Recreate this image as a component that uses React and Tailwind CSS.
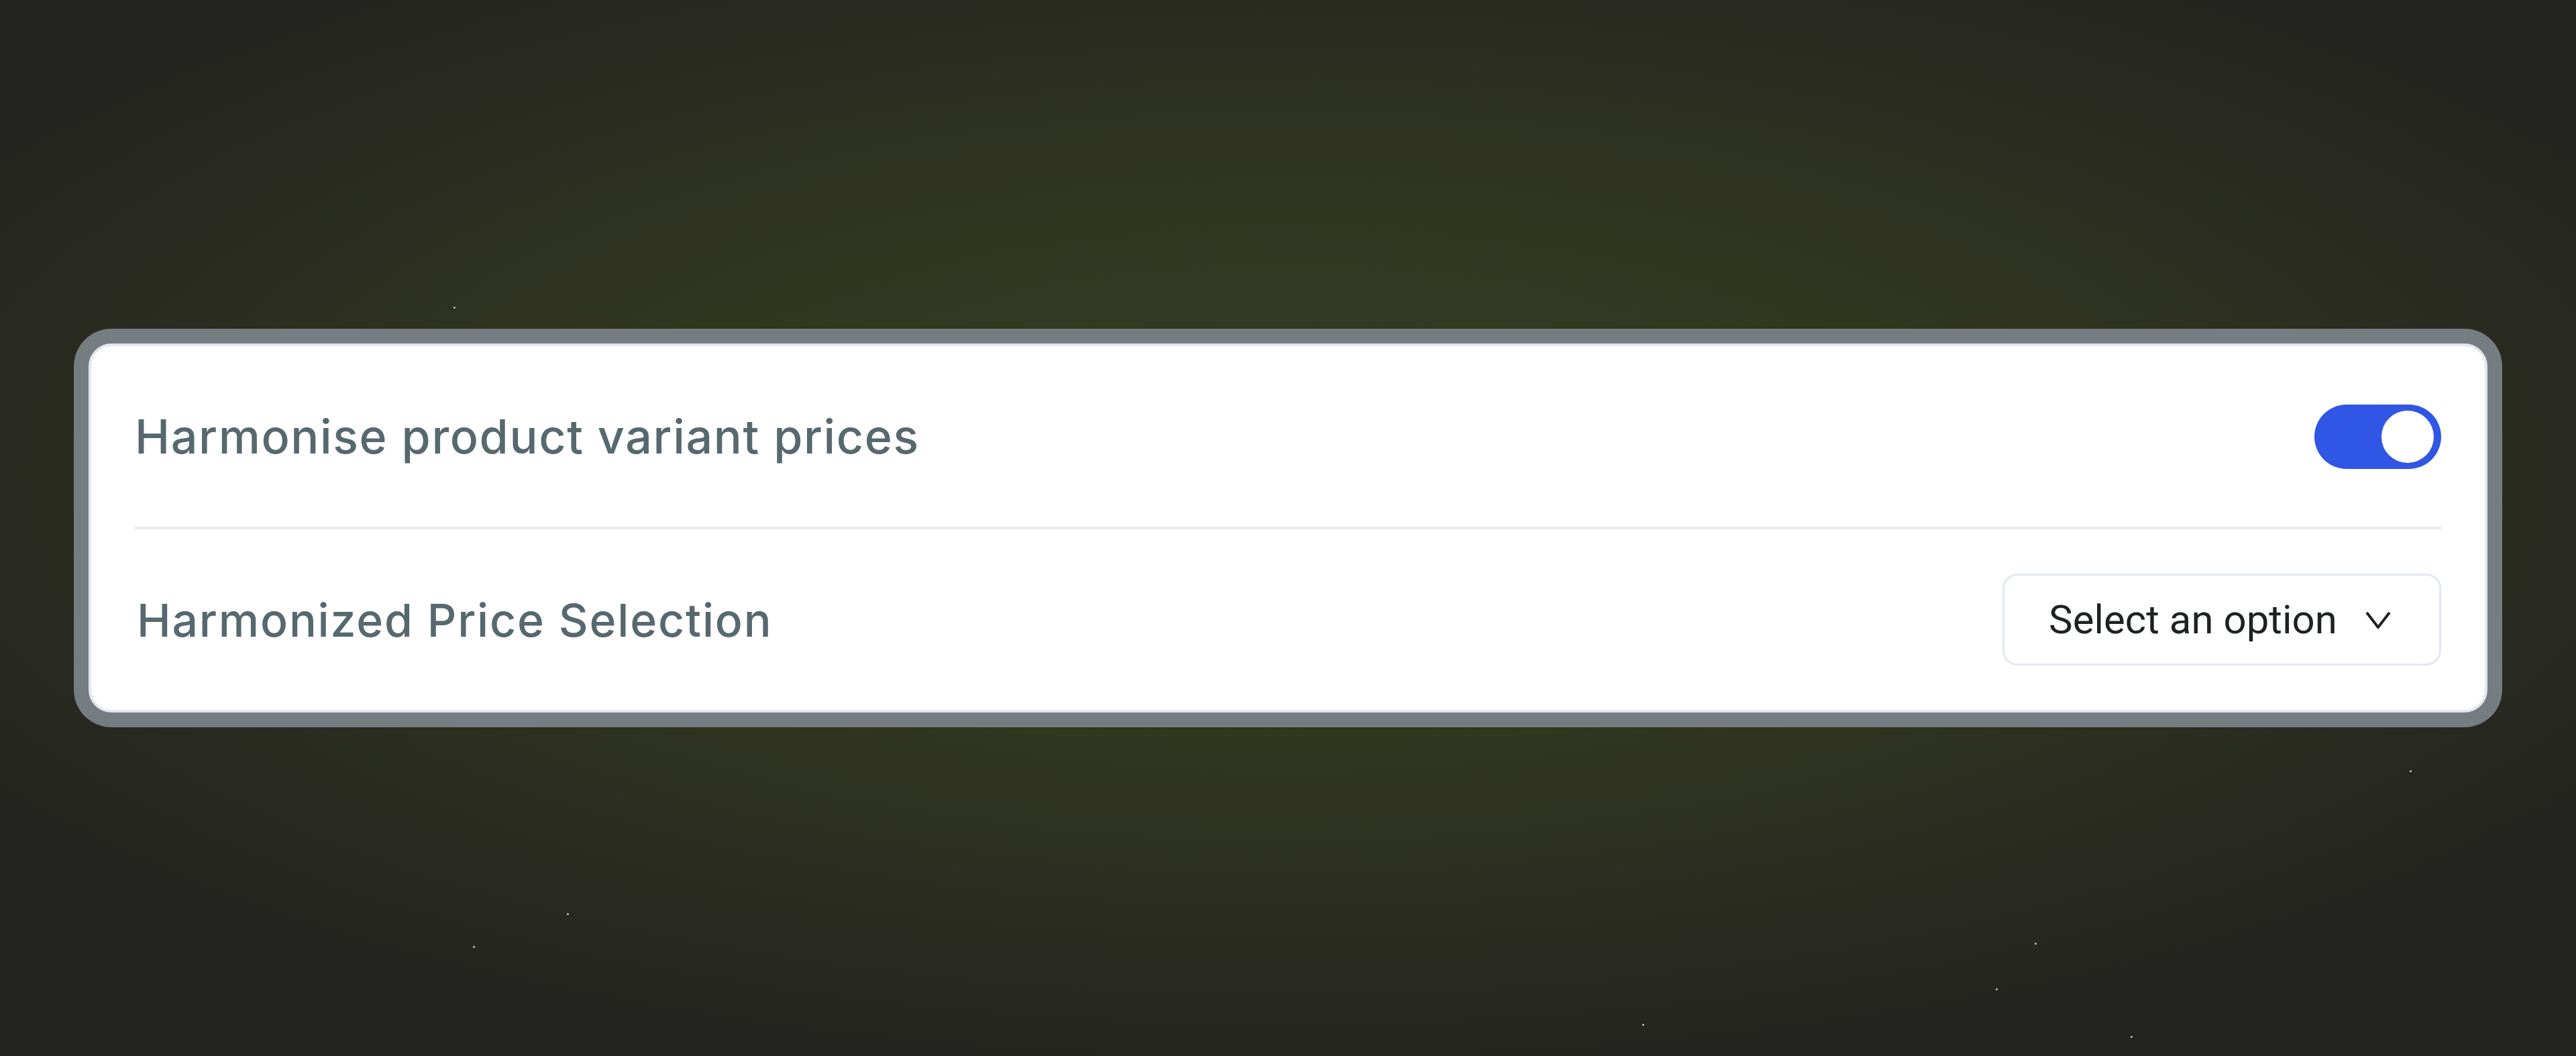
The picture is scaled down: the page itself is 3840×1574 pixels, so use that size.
import React, { useState } from 'react';

const stars = [
    { x: 676, y: 457 },
    { x: 3592, y: 1148 },
    { x: 845, y: 1361 },
    { x: 705, y: 1410 },
    { x: 3033, y: 1405 },
    { x: 2975, y: 1473 },
    { x: 2448, y: 1526 },
    { x: 3176, y: 1544 },
];

const Toggle = ({ on, onChange }) => (
    <button
        type="button"
        onClick={() => onChange(!on)}
        className={`flex h-[96px] w-[189px] items-center rounded-full px-[11px] ${on ? 'justify-end bg-[#3056e5]' : 'justify-start bg-[#cbd5e1]'}`}
    >
        <span className="block h-[78px] w-[78px] rounded-full bg-white" />
    </button>
);

const SettingsCard = () => {
    const [harmonise, setHarmonise] = useState(true);

    return (
        <div className="w-[3620px] rounded-[56px] bg-[#767d82] p-[22px]">
            <div className="rounded-[34px] border-[4px] border-[#e3e8ef] bg-white px-[65px]">
                <div className="flex h-[269px] items-center justify-between">
                    <span className="font-['Inter',sans-serif] text-[70px] font-medium tracking-[1.6px] text-[#57686f]">
                        Harmonise product variant prices
                    </span>
                    <Toggle on={harmonise} onChange={setHarmonise} />
                </div>
                <div className="h-[4px] bg-[#e6eaf1]" />
                <div className="flex h-[269px] items-center justify-between">
                    <span className="pl-[3px] font-['Inter',sans-serif] text-[68px] font-medium tracking-[1.8px] text-[#57686f]">
                        Harmonized Price Selection
                    </span>
                    <button
                        type="button"
                        className="flex h-[137px] w-[654px] items-center gap-[42px] rounded-[22px] border-[3px] border-[#e3e8ef] bg-white pl-[66px]"
                    >
                        <span className="font-['Roboto',sans-serif] text-[60px] text-[#1f2320]">Select an option</span>
                        <svg width="38" height="26" viewBox="0 0 38 26" fill="none" stroke="#1f2320" strokeWidth="4">
                            <polyline points="2,2 19,24 36,2" />
                        </svg>
                    </button>
                </div>
            </div>
        </div>
    );
};

export default function App() {
    return (
        <div className="relative flex h-[1574px] w-full items-center justify-center overflow-hidden bg-[radial-gradient(ellipse_62%_58%_at_50%_45%,#363c25_0%,#31361f_45%,#292b21_78%,#232420_100%)]">
            {stars.map((s, i) => (
                <span
                    key={i}
                    className="absolute h-[3px] w-[3px] rounded-full bg-[#c9ccc4]"
                    style={{ left: s.x, top: s.y }}
                />
            ))}
            <SettingsCard />
        </div>
    );
}
